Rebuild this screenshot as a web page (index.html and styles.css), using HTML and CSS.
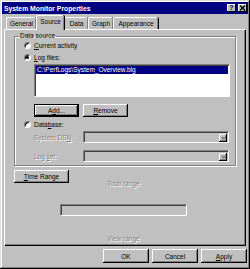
FILE: index.html
```html
<!DOCTYPE html>
<html lang="en">
<head>
    <meta charset="UTF-8">
    <title>System Monitor Properties</title>
    <link rel="stylesheet" href="styles.css">
</head>
<body>
    <div class="window">
        <div class="titlebar">
            <span class="title">System Monitor Properties</span>
            <span class="caption-btns">
                <span class="cbtn help">?</span>
                <span class="cbtn close">
                    <svg width="7" height="6" viewBox="0 0 7 6"><path d="M1 0.5 L6 5.5 M6 0.5 L1 5.5" stroke="#000" stroke-width="1.4"/></svg>
                </span>
            </span>
        </div>

        <div class="tabs">
            <div class="tab tab-general">General</div>
            <div class="tab tab-source selected">Source</div>
            <div class="tab tab-data">Data</div>
            <div class="tab tab-graph">Graph</div>
            <div class="tab tab-appearance">Appearance</div>
        </div>

        <div class="panel">
            <fieldset class="group">
                <legend>Data source</legend>

                <div class="radio-row first">
                    <span class="radio"></span>
                    <span><u>C</u>urrent activity</span>
                </div>
                <div class="radio-row">
                    <span class="radio"><span class="dot"></span></span>
                    <span><u>L</u>og files:</span>
                </div>

                <div class="listbox">
                    <div class="list-item selected">C:\PerfLogs\System_Overview.blg</div>
                </div>

                <div class="btn-row">
                    <div class="btn default">A<u>d</u>d...</div>
                    <div class="btn"><u>R</u>emove</div>
                </div>

                <div class="radio-row db">
                    <span class="radio"></span>
                    <span>Data<u>b</u>ase:</span>
                </div>

                <div class="field-row dsn">
                    <span class="field-label disabled">System DS<u>N</u>:</span>
                    <div class="combo"><span class="combo-arrow"><svg width="5" height="3" viewBox="0 0 5 3"><path d="M0 0 H5 L2.5 3 Z" fill="#808080"/></svg></span></div>
                </div>
                <div class="field-row logset">
                    <span class="field-label disabled">Log <u>s</u>et:</span>
                    <div class="combo"><span class="combo-arrow"><svg width="5" height="3" viewBox="0 0 5 3"><path d="M0 0 H5 L2.5 3 Z" fill="#808080"/></svg></span></div>
                </div>
            </fieldset>

            <div class="btn time-btn"><u>T</u>ime Range</div>
            <div class="range-label total disabled">Total range</div>
            <div class="range-box"></div>
            <div class="range-label view disabled">View range</div>
        </div>

        <div class="footer">
            <div class="btn">OK</div>
            <div class="btn">Cancel</div>
            <div class="btn"><u>A</u>pply</div>
        </div>
    </div>
</body>
</html>
```

FILE: styles.css
```css
* {
    box-sizing: border-box;
}

body {
    margin: 0;
    background: #c0c0c0;
    font-family: "Liberation Sans", Arial, sans-serif;
    font-size: 6.5px;
    color: #000;
}

u {
    text-decoration: underline;
    text-underline-offset: 1px;
}

.window {
    width: 250px;
    height: 269px;
    padding: 2px;
    background: #c0c0c0;
    box-shadow: inset -1px -1px #000, inset 1px 1px #dfdfdf,
                inset -2px -2px #808080, inset 2px 2px #fff;
}

/* title bar */
.titlebar {
    height: 12px;
    background: #000080;
    display: flex;
    align-items: center;
    justify-content: space-between;
}

.title {
    color: #fff;
    font-weight: bold;
    font-size: 6.8px;
    padding-left: 2px;
}

.caption-btns {
    display: flex;
    gap: 2px;
    margin-right: 1px;
}

.cbtn {
    width: 9px;
    height: 8px;
    background: #c0c0c0;
    box-shadow: inset -1px -1px #000, inset 1px 1px #fff;
    display: flex;
    align-items: center;
    justify-content: center;
    font-weight: bold;
    font-size: 7px;
    line-height: 8px;
}

/* tabs */
.tabs {
    display: flex;
    align-items: flex-end;
    height: 15px;
    padding-left: 4px;
}

.tab {
    height: 12px;
    line-height: 11px;
    text-align: center;
    background: #c0c0c0;
    border-top: 1px solid #fff;
    border-left: 1px solid #fff;
    border-radius: 2px 2px 0 0;
    box-shadow: inset -1px 0 #808080, 1px 0 #000;
}

.tab-general { width: 30px; }
.tab-source { width: 28px; }
.tab-data { width: 24px; }
.tab-graph { width: 25px; }
.tab-appearance { width: 45px; }

.tab.selected {
    height: 15px;
    line-height: 12px;
    margin-bottom: -1px;
    position: relative;
    z-index: 1;
}

/* property page */
.panel {
    margin-left: 2px;
    width: 241px;
    height: 216px;
    border-top: 1px solid #fff;
    border-left: 1px solid #fff;
    box-shadow: inset -1px -1px #808080, 1px 1px #000;
}

.group {
    margin: 2px 0 0 9px;
    padding: 0;
    width: 222px;
    height: 134px;
    border: 1px solid #808080;
    box-shadow: inset 1px 1px #fff, 1px 1px #fff;
}

.group legend {
    margin-left: 4px;
    padding: 0 1px;
    line-height: 8px;
}

.radio-row {
    display: flex;
    align-items: center;
    gap: 3px;
    height: 9px;
    margin: 3px 0 0 9px;
}

.radio-row.first {
    margin-top: 1px;
}

.radio {
    width: 7px;
    height: 7px;
    border-radius: 50%;
    background: #fff;
    border: 1px solid;
    border-color: #808080 #fff #fff #808080;
    box-shadow: inset 1px 1px #000;
    display: flex;
    align-items: center;
    justify-content: center;
}

.dot {
    width: 3px;
    height: 3px;
    border-radius: 50%;
    background: #000;
}

.listbox {
    margin: 2px 0 0 19px;
    width: 196px;
    height: 33px;
    background: #fff;
    border: 1px solid;
    border-color: #808080 #fff #fff #808080;
    box-shadow: inset 1px 1px #404040;
    padding: 1px 1px 0 1px;
}

.list-item {
    height: 8px;
    line-height: 8px;
    padding-left: 1px;
}

.list-item.selected {
    background: #000080;
    color: #fff;
}

.btn-row {
    display: flex;
    gap: 4px;
    margin: 7px 0 0 19px;
}

.btn {
    width: 45px;
    height: 13px;
    display: flex;
    align-items: center;
    justify-content: center;
    background: #c0c0c0;
    box-shadow: inset -1px -1px #000, inset 1px 1px #fff,
                inset -2px -2px #808080;
}

.btn.default {
    border: 1px solid #000;
    box-shadow: inset -1px -1px #000, inset 1px 1px #fff,
                inset -2px -2px #808080;
}

.radio-row.db {
    margin-top: 3px;
}

.field-row {
    display: flex;
    align-items: center;
    margin-left: 19px;
    height: 12px;
}

.field-row.dsn {
    margin-top: 2px;
}

.field-row.logset {
    margin-top: 7px;
}

.field-label {
    width: 49px;
}

.disabled {
    color: #808080;
    text-shadow: 1px 1px #fff;
}

.combo {
    width: 146px;
    height: 12px;
    border: 1px solid;
    border-color: #808080 #fff #fff #808080;
    box-shadow: inset 1px 1px #404040;
    display: flex;
    justify-content: flex-end;
    padding: 2px 1px 1px 2px;
}

.combo-arrow {
    width: 8px;
    height: 8px;
    background: #c0c0c0;
    box-shadow: inset -1px -1px #000, inset 1px 1px #fff,
                inset -2px -2px #808080;
    display: flex;
    align-items: center;
    justify-content: center;
}

.time-btn {
    width: 55px;
    margin: 4px 0 0 9px;
}

.range-label {
    text-align: center;
    line-height: 8px;
}

.range-label.total {
    margin-top: -3px;
    padding-right: 3px;
}

.range-box {
    margin: 16px 0 0 55px;
    width: 127px;
    height: 12px;
    border: 1px solid;
    border-color: #808080 #fff #fff #808080;
    box-shadow: inset 1px 1px #404040;
}

.range-label.view {
    margin-top: 19px;
    padding-right: 3px;
}

/* dialog buttons */
.footer {
    display: flex;
    justify-content: flex-end;
    gap: 3px;
    margin-top: 4px;
    padding-right: 1px;
}

.footer .btn {
    width: 46px;
    height: 14px;
}
```
